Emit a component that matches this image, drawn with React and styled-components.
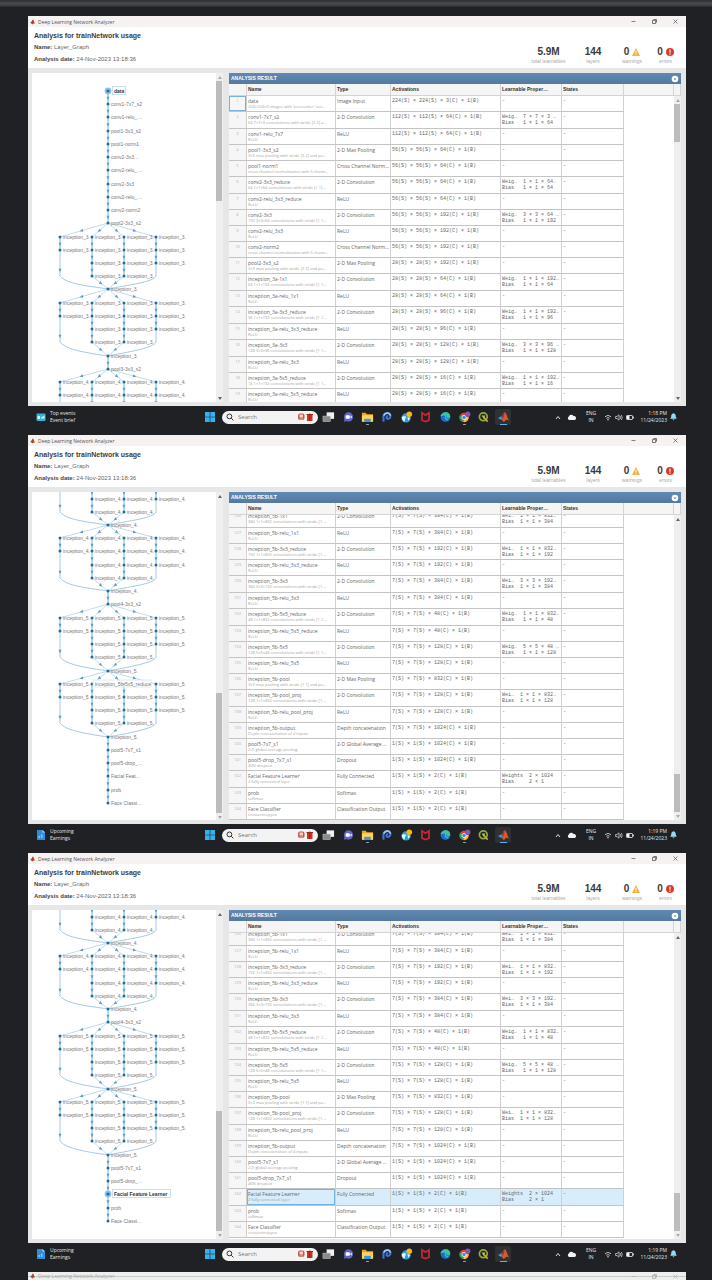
import React from "react";
import styled, { createGlobalStyle, css } from "styled-components";

const sans = '"Liberation Sans", Arial, sans-serif';
const ui = '"Open Sans", "Noto Sans", sans-serif';
const mono = '"Liberation Mono", monospace';

const GlobalStyle = createGlobalStyle`
  * { box-sizing: border-box; }
  body { margin: 0; background: #202124; font-family: ${sans}; }
  button { padding: 0; border: 0; background: none; color: inherit; font: inherit; }
  svg { display: block; }
`;

/* ---------- page and window frame ---------- */

const Page = styled.main`
  display: flex;
  flex-direction: column;
  min-height: 100vh;
  overflow: hidden;
  background: #202124;
`;

const TopStrip = styled.div`
  height: 7px;
  margin-bottom: 9px;
  background: linear-gradient(#2d2e30, #4c4d50 55%, #2a2b2d);
`;

const Screen = styled.section`
  margin: 0 26px 0 28px;
`;

const CutScreen = styled(Screen)`
  flex: 1 0 8px;
  overflow: hidden;
  background: #eeeeec;
`;

const TitleBar = styled.header`
  display: flex;
  align-items: center;
  gap: 3px;
  height: ${(p) => (p.$faint ? 8 : 11)}px;
  padding: 0 6px 0 2px;
  background: ${(p) => (p.$faint ? "linear-gradient(#eeeeec 4px, #c9cbc8 4px, #c9cbc8 5px, #eeeeec 5px)" : "#f5f2f1")};
  color: ${(p) => (p.$faint ? "#aaa" : "#555")};
  font-size: 5px;
  line-height: 8px;
`;

const TitleText = styled.span`
  flex: 1;
  font-family: ${ui};
`;

const WindowButtons = styled.div`
  display: flex;
  gap: 11px;
`;

const WindowButton = styled.button`
  display: grid;
  place-items: center;
  width: 10px;
  height: 8px;
`;

const Summary = styled.div`
  display: flex;
  justify-content: space-between;
  height: 41px;
  padding: 4px 12px 0 6px;
  background: #fff;
`;

const Heading = styled.h1`
  margin: 0 0 2px;
  color: #3c3c3c;
  font-size: 7px;
  line-height: 10px;
`;

const Fact = styled.p`
  margin: 0 0 4px;
  color: #666;
  font-size: 6px;
  line-height: 8px;

  b { color: #444; }
`;

const Stats = styled.div`
  display: grid;
  grid-template-columns: 37px 28px 26px 17px;
  gap: 12px;
  padding-top: 14px;
`;

const Stat = styled.div`
  display: flex;
  flex-direction: column;
  align-items: center;
  color: #aaa;
  font-size: 5px;
  line-height: 6px;
  white-space: nowrap;
`;

const StatValue = styled.strong`
  display: flex;
  align-items: center;
  gap: 3px;
  color: #3a3a3a;
  font-size: 10px;
  line-height: 13px;
`;

const Workspace = styled.div`
  display: grid;
  grid-template-columns: 191px 1fr;
  gap: 6px;
  height: ${(p) => p.$height}px;
  padding: 5px 5px 4px 4px;
  background: #e7e7e7;
`;

const GraphPane = styled.div`
  display: grid;
  grid-template-columns: 1fr 7px;
  min-height: 0;
  overflow: hidden;
  background: #fff;
`;

const GraphSvg = styled.svg`
  width: 184px;
  height: 329px;

  text { font-family: ${sans}; font-size: 5px; fill: #777; }
`;

/* ---------- scrollbar ---------- */

const Bar = styled.div`
  display: flex;
  flex-direction: column;
  width: 7px;
  min-height: 0;
  background: #efefef;
`;

const BarArrow = styled.button`
  display: grid;
  place-items: center;
  height: 8px;
  color: #888;
`;

const BarTrack = styled.div`
  display: flex;
  flex: 1;
  flex-direction: column;
  justify-content: ${(p) => (p.$end ? "flex-end" : "flex-start")};
  padding: 0 1px 0 0;
`;

const BarThumb = styled.div`
  height: ${(p) => p.$size}px;
  background: #bcbcbc;
`;

function Scrollbar({ size, end }) {
  return (
    <Bar>
      <BarArrow aria-label="Scroll up">
        <svg width="4" height="3" viewBox="0 0 4 3"><path d="M2 0L4 3H0Z" fill={end ? "#666" : "#aaa"} /></svg>
      </BarArrow>
      <BarTrack $end={end}><BarThumb $size={size} /></BarTrack>
      <BarArrow aria-label="Scroll down">
        <svg width="4" height="3" viewBox="0 0 4 3"><path d="M0 0H4L2 3Z" fill={end ? "#aaa" : "#666"} /></svg>
      </BarArrow>
    </Bar>
  );
}

/* ---------- layer graph ---------- */

const PITCH = 13.23;
const MID = 76;
const COLS = [28, 60, 92, 124];
const ROWS_IN_COL = [2, 4, 4, 3];
const VIEW_END = 326;

function Arrow({ x1, y1, x2, y2, t = 0.55 }) {
  const angle = (Math.atan2(y2 - y1, x2 - x1) * 180) / Math.PI;
  return (
    <path
      d="M2 0L-1.4 1.5V-1.5Z"
      fill="#5d9cc6"
      transform={`translate(${x1 + (x2 - x1) * t} ${y1 + (y2 - y1) * t}) rotate(${angle})`}
    />
  );
}

function Link({ x1, y1, x2, y2, strong }) {
  return (
    <g>
      <path d={`M${x1} ${y1}L${x2} ${y2}`} stroke={strong ? "#79b2d8" : "#a5cbe3"} strokeWidth={strong ? 1 : 0.7} />
      <Arrow x1={x1} y1={y1} x2={x2} y2={y2} />
    </g>
  );
}

function Node({ x, y, label }) {
  if (y < 0 || y > VIEW_END) return null;
  return (
    <g>
      <circle cx={x} cy={y} r="1.5" fill="#1f6ba3" />
      {label && <text x={x + 3} y={y + 2}>{label}</text>}
    </g>
  );
}

function ActiveNode({ x, y, label, width }) {
  return (
    <g>
      <circle cx={x} cy={y} r="3.4" fill="#8cc4ea" />
      <circle cx={x} cy={y} r="1.6" fill="#1f6ba3" />
      <rect x={x + 4.5} y={y - 4.5} width={width} height="8" fill="#fff" stroke="#b9d9ee" strokeWidth="0.8" />
      <text x={x + 6} y={y + 1.6} style={{ fontWeight: 700, fill: "#333" }}>{label}</text>
    </g>
  );
}

function Block({ at, start, label, hover }) {
  const top = at(start);
  const out = at(start + 5);
  const bend = at(start + 4);
  return (
    <g>
      {COLS.map((x, c) => (
        <g key={x}>
          <Link x1={MID} y1={top} x2={x} y2={at(start + 1)} />
          {Array.from({ length: ROWS_IN_COL[c] - 1 }, (_, r) => (
            <Link key={r} x1={x} y1={at(start + 1 + r)} x2={x} y2={at(start + 2 + r)} strong />
          ))}
          {ROWS_IN_COL[c] === 4 && <Link x1={x} y1={bend} x2={MID} y2={out} />}
        </g>
      ))}
      <path
        d={`M28 ${at(start + 2)}V${bend}C34 ${bend + 8} 56 ${out - 3} ${MID} ${out}C96 ${out - 4} 122 ${bend + 6} 124 ${bend}V${at(start + 3)}`}
        stroke="#8cbddd" strokeWidth="0.8"
      />
      <Arrow x1={28} y1={at(start + 3)} x2={28} y2={bend} />
      {COLS.map((x, c) =>
        Array.from({ length: ROWS_IN_COL[c] }, (_, r) => {
          const hidden = hover && r === 0 && (c === 1 || c === 2);
          return <Node key={`${c}-${r}`} x={x} y={at(start + 1 + r)} label={hidden ? null : label} />;
        })
      )}
      {hover && (
        <g>
          <rect x="61" y={at(start + 1) - 4} width="58" height="7" fill="#fff" fillOpacity="0.7" stroke="#c5dded" strokeWidth="0.6" />
          <text x="63" y={at(start + 1) + 2}>inception_5b-5x5_reduce</text>
        </g>
      )}
    </g>
  );
}

function Chain({ at, from, labels, active }) {
  return (
    <g>
      {labels.slice(1).map((_, i) => (
        <Link key={i} x1={MID} y1={at(from + i)} x2={MID} y2={at(from + i + 1)} strong />
      ))}
      {labels.map((label, i) =>
        i === active ? null : <Node key={i} x={MID} y={at(from + i)} label={label} />
      )}
    </g>
  );
}

function TopGraph() {
  const at = (k) => 18 + Math.round(k * PITCH);
  return (
    <GraphSvg fill="none" role="img" aria-label="Layer graph">
      <Block at={at} start={10} label="inception_3." />
      <Block at={at} start={15} label="inception_3." />
      <Block at={at} start={21} label="inception_4." />
      <Chain
        at={at}
        from={0}
        active={0}
        labels={["data", "conv1-7x7_s2", "conv1-relu_…", "pool1-3x3_s2", "pool1-norm1", "conv2-3x3…", "conv2-relu_…", "conv2-3x3", "conv2-relu_…", "conv2-norm2", "pool2-3x3_s2"]}
      />
      <Node x={MID} y={at(15)} label="inception_3." />
      <Chain at={at} from={20} labels={["inception_3.", "pool3-3x3_s2"]} />
      <ActiveNode x={MID} y={at(0)} label="data" width={13} />
    </GraphSvg>
  );
}

function BottomGraph({ selected }) {
  const at = (k) => 33 + Math.round(k * PITCH);
  return (
    <GraphSvg fill="none" role="img" aria-label="Layer graph">
      <Block at={at} start={-5} label="inception_4." />
      <Block at={at} start={0} label="inception_4." />
      <Block at={at} start={6} label="inception_5." />
      <Block at={at} start={11} label="inception_5." hover={!selected} />
      <Node x={MID} y={at(0)} label="inception_4." />
      <Chain at={at} from={5} labels={["inception_4.", "pool4-3x3_s2"]} />
      <Node x={MID} y={at(11)} label="inception_5." />
      <Chain
        at={at}
        from={16}
        active={selected ? 3 : -1}
        labels={["inception_5.", "pool5-7x7_s1", "pool5-drop_…", "Facial Feat…", "prob", "Face Classi…"]}
      />
      {selected && <ActiveNode x={MID} y={at(19)} label="Facial Feature Learner" width={58} />}
    </GraphSvg>
  );
}

/* ---------- result table ---------- */

const ResultPane = styled.div`
  display: flex;
  flex-direction: column;
  min-width: 0;
  min-height: 0;
  overflow: hidden;
  background: #fff;
`;

const ResultBar = styled.div`
  display: flex;
  align-items: center;
  justify-content: space-between;
  flex: none;
  height: 11px;
  padding: 0 2px;
  background: linear-gradient(#6089b3, #55799f);
  color: #fff;
  font-size: 5px;
  font-weight: 700;
  line-height: 7px;
`;

const Grid = styled.table`
  width: 100%;
  border-collapse: separate;
  border-spacing: 0;
  table-layout: fixed;
`;

const HeadCell = styled.th`
  height: 12px;
  padding: 0 1px;
  border-right: 1px solid #d4d4d4;
  border-bottom: 1px solid #d4d4d4;
  background: #f5f5f5;
  color: #333;
  font-size: 5px;
  line-height: 7px;
  text-align: left;
  white-space: nowrap;
`;

const ResultScroll = styled.div`
  display: grid;
  grid-template-columns: 1fr 7px;
  flex: 1;
  min-height: 0;
`;

const RowsClip = styled.div`
  min-height: 0;
  overflow: hidden;
`;

const RowsGrid = styled(Grid)`
  margin-top: ${(p) => (p.$scrolled ? "-4px" : "0")};
`;

const Cell = styled.td`
  height: ${(p) => (p.$tall ? 17 : 16)}px;
  padding: 2px 1px 0;
  border-right: 1px solid #d0d0d0;
  border-bottom: 1px solid #c4c4c4;
  background: ${(p) => (p.$active ? "#d8edfb" : "#fff")};
  color: #666;
  font-family: ${ui};
  font-size: 5px;
  line-height: 6px;
  vertical-align: top;
  white-space: pre;
  overflow: hidden;
`;

const blueFrame = css`
  box-shadow: inset 0 0 0 1px #74b3e0;
`;

const NumberCell = styled(Cell)`
  background: #f6f6f6;
  color: #b0b0b0;
  font-size: 4px;
  text-align: center;
  ${(p) => p.$framed && blueFrame}
`;

const NameCell = styled(Cell)`
  ${(p) => p.$active && blueFrame}
`;

const MonoCell = styled(Cell)`
  font-family: ${mono};
`;

const EmptyCell = styled.td`
  background: #fff;
`;

const Detail = styled.div`
  color: #a2a2a2;
  font-size: 4px;
  line-height: 6px;
`;

const Columns = ({ tail }) => (
  <colgroup>
    <col style={{ width: 18 }} />
    <col style={{ width: 89 }} />
    <col style={{ width: 55 }} />
    <col style={{ width: 110 }} />
    <col style={{ width: 61 }} />
    <col style={{ width: 62 }} />
    <col />
    {tail && <col style={{ width: 7 }} />}
  </colgroup>
);

const act = (s, c) => `${s}(S) × ${s}(S) × ${c}(C) × 1(B)`;
const conv = (n, k, s) => `${n} ${k} convolutions with stride ${s}`;
const relu = "ReLU";
const conv2d = "2-D Convolution";

/* [number, name, detail, type, activations, weights, bias, tall] */
const firstRows = [
  [1, "data", "224×224×3 images with 'zerocenter' nor…", "Image Input", act(224, 3)],
  [2, "conv1-7x7_s2", conv(64, "7×7×3", "[2 2] a…"), conv2d, act(112, 64), "Weig…  7 × 7 × 3 …", "Bias   1 × 1 × 64", true],
  [3, "conv1-relu_7x7", relu, relu, act(112, 64)],
  [4, "pool1-3x3_s2", "3×3 max pooling with stride [2 2] and pa…", "2-D Max Pooling", act(56, 64)],
  [5, "pool1-norm1", "cross channel normalization with 5 chann…", "Cross Channel Norm…", act(56, 64)],
  [6, "conv2-3x3_reduce", conv(64, "1×1×64", "[1 1] …"), conv2d, act(56, 64), "Weig…  1 × 1 × 64…", "Bias   1 × 1 × 64", true],
  [7, "conv2-relu_3x3_reduce", relu, relu, act(56, 64)],
  [8, "conv2-3x3", conv(192, "3×3×64", "[1 1…"), conv2d, act(56, 192), "Weig…  3 × 3 × 64 …", "Bias   1 × 1 × 192"],
  [9, "conv2-relu_3x3", relu, relu, act(56, 192)],
  [10, "conv2-norm2", "cross channel normalization with 5 chann…", "Cross Channel Norm…", act(56, 192)],
  [11, "pool2-3x3_s2", "3×3 max pooling with stride [2 2] and pa…", "2-D Max Pooling", act(28, 192)],
  [12, "inception_3a-1x1", conv(64, "1×1×192", "[1 1…"), conv2d, act(28, 64), "Weig…  1 × 1 × 192…", "Bias   1 × 1 × 64", true],
  [13, "inception_3a-relu_1x1", relu, relu, act(28, 64)],
  [14, "inception_3a-3x3_reduce", conv(96, "1×1×192", "[1 1…"), conv2d, act(28, 96), "Weig…  1 × 1 × 192…", "Bias   1 × 1 × 96", true],
  [15, "inception_3a-relu_3x3_reduce", relu, relu, act(28, 96)],
  [16, "inception_3a-3x3", conv(128, "3×3×96", "[1 1…"), conv2d, act(28, 128), "Weig…  3 × 3 × 96 …", "Bias   1 × 1 × 128", true],
  [17, "inception_3a-relu_3x3", relu, relu, act(28, 128)],
  [18, "inception_3a-5x5_reduce", conv(16, "1×1×192", "[1 1…"), conv2d, act(28, 16), "Weig…  1 × 1 × 192…", "Bias   1 × 1 × 16"],
  [19, "inception_3a-relu_5x5_reduce", relu, relu, act(28, 16)],
];

const lastRows = [
  [126, "inception_5b-1x1", conv(384, "1×1×832", "[1 …"), conv2d, act(7, 384), "Wei…  1 × 1 × 832…", "Bias  1 × 1 × 384", true],
  [127, "inception_5b-relu_1x1", relu, relu, act(7, 384)],
  [128, "inception_5b-3x3_reduce", conv(192, "1×1×832", "[1 …"), conv2d, act(7, 192), "Wei…  1 × 1 × 832…", "Bias  1 × 1 × 192"],
  [129, "inception_5b-relu_3x3_reduce", relu, relu, act(7, 192)],
  [130, "inception_5b-3x3", conv(384, "3×3×192", "[1 …"), conv2d, act(7, 384), "Wei…  3 × 3 × 192…", "Bias  1 × 1 × 384", true],
  [131, "inception_5b-relu_3x3", relu, relu, act(7, 384)],
  [132, "inception_5b-5x5_reduce", conv(48, "1×1×832", "[1 1…"), conv2d, act(7, 48), "Weig…  1 × 1 × 832…", "Bias   1 × 1 × 48", true],
  [133, "inception_5b-relu_5x5_reduce", relu, relu, act(7, 48)],
  [134, "inception_5b-5x5", conv(128, "5×5×48", "[1 1…"), conv2d, act(7, 128), "Weig…  5 × 5 × 48 …", "Bias   1 × 1 × 128"],
  [135, "inception_5b-relu_5x5", relu, relu, act(7, 128)],
  [136, "inception_5b-pool", "3×3 max pooling with stride [1 1] and pa…", "2-D Max Pooling", act(7, 832)],
  [137, "inception_5b-pool_proj", conv(128, "1×1×832", "[1 …"), conv2d, act(7, 128), "Wei…  1 × 1 × 832…", "Bias  1 × 1 × 128", true],
  [138, "inception_5b-relu_pool_proj", relu, relu, act(7, 128)],
  [139, "inception_5b-output", "Depth concatenation of 4 inputs", "Depth concatenation", act(7, 1024)],
  [140, "pool5-7x7_s1", "2-D global average pooling", "2-D Global Average …", act(1, 1024)],
  [141, "pool5-drop_7x7_s1", "40% dropout", "Dropout", act(1, 1024)],
  [142, "Facial Feature Learner", "2 fully connected layer", "Fully Connected", act(1, 2), "Weights  2 × 1024", "Bias     2 × 1", true],
  [143, "prob", "softmax", "Softmax", act(1, 2)],
  [144, "Face Classifier", "crossentropyex", "Classification Output", act(1, 2)],
];

function ResultTable({ rows, scrolled, framed, active }) {
  return (
    <ResultPane>
      <ResultBar>
        <span>ANALYSIS RESULT</span>
        <button aria-label="Collapse results">
          <svg width="8" height="8" viewBox="0 0 8 8">
            <circle cx="4" cy="4" r="3.3" fill="#fff" />
            <path d="M2.6 3.4L5.4 3.4L4 5.2Z" fill="#5b82ab" />
          </svg>
        </button>
      </ResultBar>
      <Grid>
        <Columns tail />
        <thead>
          <tr>
            {["", "Name", "Type", "Activations", "Learnable Proper…", "States", "", ""].map((h, i) => (
              <HeadCell key={i} scope="col">{h}</HeadCell>
            ))}
          </tr>
        </thead>
      </Grid>
      <ResultScroll>
        <RowsClip>
          <RowsGrid $scrolled={scrolled}>
            <Columns />
            <tbody>
              {rows.map(([n, name, detail, type, acts, weights, bias, tall]) => {
                const cell = { $tall: tall, $active: n === active };
                return (
                  <tr key={n}>
                    <NumberCell $tall={tall} $framed={n === framed}>{n}</NumberCell>
                    <NameCell {...cell}>{name}<Detail>{detail}</Detail></NameCell>
                    <Cell {...cell}>{type}</Cell>
                    <MonoCell {...cell}>{acts}</MonoCell>
                    <MonoCell {...cell}>{weights ? `${weights}\n${bias}` : "-"}</MonoCell>
                    <MonoCell {...cell}>-</MonoCell>
                    <EmptyCell />
                  </tr>
                );
              })}
            </tbody>
          </RowsGrid>
        </RowsClip>
        <Scrollbar size={38} end={scrolled} />
      </ResultScroll>
    </ResultPane>
  );
}

/* ---------- taskbar ---------- */

const TaskbarRow = styled.footer`
  display: flex;
  align-items: center;
  height: 29px;
  padding: 0 9px 7px 8px;
  color: #e4e4e4;
  font-family: ${ui};
  font-size: 5px;
  line-height: 7px;
`;

const Widget = styled.button`
  display: flex;
  align-items: center;
  gap: 4px;
  width: 169px;
  text-align: left;
  white-space: pre;
`;

const SearchBox = styled.label`
  display: flex;
  align-items: center;
  gap: 4px;
  width: 96px;
  height: 13px;
  margin: 0 1px 0 7px;
  padding: 0 4px;
  border-radius: 7px;
  background: #f3f3f3;

  input {
    flex: 1;
    width: 20px;
    min-width: 0;
    padding: 0;
    border: 0;
    background: none;
    font-family: ${ui};
    font-size: 6px;
    line-height: 9px;
    outline: 0;
  }
  input::placeholder { color: #777; opacity: 1; }
`;

const Apps = styled.nav`
  display: grid;
  grid-template-columns: repeat(10, 1fr);
  width: 194px;
`;

const AppButton = styled.button`
  display: grid;
  justify-self: center;
  place-items: center;
  position: relative;
  width: 16px;
  height: 16px;
  border-radius: 2px;
  background: ${(p) => (p.$current ? "#303132" : "none")};

  &::after {
    content: ${(p) => (p.$running || p.$current ? '""' : "none")};
    position: absolute;
    bottom: 0;
    width: ${(p) => (p.$current ? 7 : 3)}px;
    height: 1px;
    background: ${(p) => (p.$current ? "#58b4ea" : "#9a9a9a")};
  }
`;

const Tray = styled.div`
  display: flex;
  align-items: center;
  gap: 3px;
  margin-left: auto;
`;

const Language = styled.button`
  width: 20px;
  text-align: center;
  line-height: 7px;
`;

const Clock = styled.button`
  width: 30px;
  text-align: right;
  white-space: pre;
`;

const icons = {
  "Task view": (
    <><rect x="5" y="1" width="8" height="7" fill="#f1f1f1" /><rect x="1" y="5" width="8" height="6" fill="#8a8a8a" stroke="#c9c9c9" strokeWidth="0.5" /></>
  ),
  Chat: (
    <><circle cx="7" cy="6" r="5" fill="#6264c6" /><path d="M2 11L3 7L6 10Z" fill="#6264c6" /><rect x="4" y="4" width="4.4" height="4" rx="1" fill="#fff" /><path d="M8.8 5.6L10.4 4.4V7.6L8.8 6.4Z" fill="#fff" /></>
  ),
  Files: (
    <><path d="M1 1.5H5L6.5 3H13V11H1Z" fill="#e9a820" /><rect x="1" y="4" width="12" height="7" rx="0.6" fill="#fcd35c" /><rect x="3.5" y="8" width="7" height="3.4" fill="#3c95d6" /></>
  ),
  Paint: (
    <><path d="M3.5 11C4.500 9 3 6 4 4C5.500 1.500 9 1 10.600 3C12 5 11 7.500 9 8C7.500 8.300 6.600 7.300 7 6.200C7.300 5.500 8 5.200 8.700 5.500" fill="none" stroke="#3f74d8" strokeWidth="2.200" /><path d="M4 4.500C5.500 1.500 9 1 10.600 3C11 3.500 11.200 4 11.200 4.700" fill="none" stroke="#9ec4f2" strokeWidth="1.800" /></>
  ),
  Globe: (
    <><circle cx="6.500" cy="7" r="5" fill="#2f9fd8" /><path d="M2 6C4 4 5 6 6 5C7 7 5 8 5 11C3 10 2 9 2 6ZM8 6L11 7L9 10Z" fill="#e6f5fb" /><circle cx="10" cy="3" r="3" fill="#f7b916" /></>
  ),
  Shield: (
    <path d="M3.200 1.500V9.500L7 11L10.800 9.500V1.500L7 4Z" fill="none" stroke="#c92637" strokeWidth="1.900" />
  ),
  Edge: (
    <><circle cx="7" cy="6" r="5.300" fill="#1671c4" /><path d="M2 5C3 1 8-.5 11 2.500C13 5 12 8 9 7.500C8 7 8.500 6 8 5C6.500 3 3.500 4 2 5Z" fill="#42c48b" /><path d="M2 5C4 3 7 3.500 7.400 5.500C6 6 6.500 9 10 9.200" fill="none" stroke="#48b8ea" strokeWidth="1.200" /></>
  ),
  Chrome: (
    <><circle cx="6.500" cy="6.500" r="5" fill="#e14434" /><path d="M6.500 6.500L2 4.500A5 5 0 0 0 6.500 11.500Z" fill="#2fa24f" /><path d="M6.500 6.500L11.500 6A5 5 0 0 1 6 11.500Z" fill="#f6c32c" /><circle cx="6.500" cy="6.500" r="2.300" fill="#4387ea" stroke="#fff" strokeWidth="0.800" /><circle cx="10.500" cy="3" r="2.900" fill="#8257b4" /></>
  ),
  Quick: (
    <><circle cx="6.800" cy="5.800" r="4.200" fill="none" stroke="#8fab3a" strokeWidth="1.900" /><path d="M7 6L11.500 11" stroke="#c9a83c" strokeWidth="1.900" /><path d="M5 4.500H9L7 8Z" fill="#b5c763" /></>
  ),
  Matlab: (
    <><path d="M1 7L4.500 5.300L6.500 7.400L4 9Z" fill="#4a8fd0" /><path d="M4.500 5.300C6.500 4.500 7 1 8.400 1C10 1 11 6.500 13 10C11 8.700 9.800 8.500 8.600 10.300C8 11.200 7 11.500 6.500 11C6 9.500 5.500 9 4 9L6.500 7.400Z" fill="#d9582c" /><path d="M8.400 1C7.500 2 6.500 4.500 4.500 5.300L6.500 7.400C7.500 5.500 7.800 3 8.400 1Z" fill="#7a3a46" /></>
  ),
};

const running = ["Files", "Chrome"];

function Taskbar({ widget, time }) {
  return (
    <TaskbarRow>
      <Widget>
        <svg width="10" height="10" viewBox="0 0 10 10">
          {widget === "events" ? (
            <><rect x="0.500" y="1.500" width="9" height="7.500" rx="1" fill="#35b3d4" /><path d="M1.500 4H4V7H1.500ZM5 5.500L8.500 3.500V6.500H5Z" fill="#d8f6fb" /></>
          ) : (
            <><path d="M1 0H6.500L9 2.500V10H1Z" fill="#2d8fdc" /><path d="M6.500 0L9 2.500H6.500Z" fill="#a5dcff" /><path d="M2.500 8V6H4V8ZM5 8V4.500H6.500V8Z" fill="#7cc8fb" /></>
          )}
        </svg>
        <span>{widget === "events" ? "Top events\nEvent brief" : "Upcoming\nEarnings"}</span>
      </Widget>
      <button aria-label="Start">
        <svg width="10" height="10" viewBox="0 0 10 10">
          <path d="M0 0H4.700V4.700H0ZM5.300 0H10V4.700H5.300ZM0 5.300H4.700V10H0ZM5.300 5.300H10V10H5.300Z" fill="#35b1ee" />
        </svg>
      </button>
      <SearchBox>
        <svg width="8" height="8" viewBox="0 0 8 8" fill="none" stroke="#333">
          <circle cx="3.400" cy="3.400" r="2.400" /><path d="M5.200 5.200L7.400 7.400" />
        </svg>
        <input type="search" placeholder="Search" aria-label="Search" />
        <svg width="17" height="8" viewBox="0 0 17 8">
          <rect x="1" y="0.500" width="6.500" height="6.500" rx="2" fill="#c4574e" /><rect x="2.500" y="1.500" width="3.500" height="3" fill="#f1d7c2" /><path d="M2.500 6H6" stroke="#f0c070" />
          <rect x="10" y="1.500" width="5.500" height="6.500" fill="#cf3226" /><path d="M9.500 1.500H16M12.700 .5V8" stroke="#a02219" />
        </svg>
      </SearchBox>
      <Apps>
        {Object.entries(icons).map(([name, art]) => (
          <AppButton key={name} aria-label={name} $current={name === "Matlab"} $running={running.includes(name)}>
            <svg width="13" height="12" viewBox="0 0 14 12">{art}</svg>
          </AppButton>
        ))}
      </Apps>
      <Tray>
        <svg width="6" height="5" viewBox="0 0 6 5" fill="none" stroke="#ddd"><path d="M1 4L3 1.500L5 4" /></svg>
        <svg width="14" height="8" viewBox="0 0 14 8"><path d="M5 7A2 2 0 0 1 4.800 3.500A2.600 2.600 0 0 1 9.500 3A2 2 0 0 1 10.500 7Z" fill="#f2f2f2" /></svg>
        <Language aria-label="Input language">ENG<br />IN</Language>
        <svg width="8" height="7" viewBox="0 0 8 7" fill="none" stroke="#bbb"><path d="M1 2.700Q4 0 7 2.700M2.400 4.300Q4 2.900 5.600 4.300" /><circle cx="4" cy="5.800" r="0.700" fill="#eee" stroke="none" /></svg>
        <svg width="8" height="7" viewBox="0 0 8 7" fill="none" stroke="#ccc" strokeWidth="0.800"><path d="M.6 2.500H2L4 .8V6.200L2 4.500H.6ZM5.200 2Q6.200 3.500 5.200 5M6.400 1Q8 3.500 6.400 6" /></svg>
        <svg width="8" height="7" viewBox="0 0 8 7"><rect x="0.500" y="1.500" width="6" height="4" rx="0.600" fill="none" stroke="#ccc" /><rect x="1" y="2" width="2.500" height="3" fill="#f4f4f4" /><path d="M7.500 2.600V4.400" stroke="#ccc" /></svg>
        <Clock aria-label="Date and time">{`${time} PM\n11/24/2023`}</Clock>
        <svg width="7" height="8" viewBox="0 0 7 8"><path d="M3.500 .3C5.400 .5 5.800 2 5.800 3.800L6.700 5.800H.3L1.200 3.800C1.200 2 1.600 .5 3.500 .3ZM2.500 6.300H4.500L3.500 7.600Z" fill="#8fdcf4" /></svg>
      </Tray>
    </TaskbarRow>
  );
}

/* ---------- analyzer window ---------- */

function WindowTitle({ faint }) {
  return (
    <TitleBar $faint={faint}>
      <svg width="5" height="6" viewBox="0 0 5 6">
        <path d="M0 3.500L1.500 2.600L2.500 4Z" fill="#4675a8" />
        <path d="M1.500 2.800C2.300 2 2.400 .5 3 .5C3.700 .5 4 3 5 5C3.800 4.300 3.300 4.500 2.400 5.600L1 4.200Z" fill="#b63d28" />
      </svg>
      <TitleText>Deep Learning Network Analyzer</TitleText>
      <WindowButtons>
        <WindowButton aria-label="Minimize"><svg width="5" height="5" viewBox="0 0 5 5"><path d="M.5 2.500H4.500" stroke="currentColor" strokeWidth="0.700" /></svg></WindowButton>
        <WindowButton aria-label="Restore"><svg width="5" height="5" viewBox="0 0 5 5" fill="none" stroke="currentColor" strokeWidth="0.800"><path d="M.5 1.400H3.600V4.500H.5ZM1.400 .5H4.500V3.600" /></svg></WindowButton>
        <WindowButton aria-label="Close"><svg width="5" height="5" viewBox="0 0 5 5"><path d="M.5 .5L4.500 4.500M4.500 .5L.5 4.500" stroke="currentColor" strokeWidth="0.700" /></svg></WindowButton>
      </WindowButtons>
    </TitleBar>
  );
}

function Analyzer({ height, widget, time, graph, ...table }) {
  return (
    <Screen>
      <WindowTitle />
      <Summary>
        <div>
          <Heading>Analysis for trainNetwork usage</Heading>
          <Fact><b>Name:</b> Layer_Graph</Fact>
          <Fact><b>Analysis date:</b> 24-Nov-2023 13:18:36</Fact>
        </div>
        <Stats>
          <Stat><StatValue>5.9M</StatValue>total learnables</Stat>
          <Stat><StatValue>144</StatValue>layers</Stat>
          <Stat>
            <StatValue>0
              <svg width="8" height="8" viewBox="0 0 8 8"><path d="M4 0L8 8H0Z" fill="#f5b13a" /><path d="M4 2.800V5.500M4 6.200V7.200" stroke="#fff" strokeWidth="0.900" /></svg>
            </StatValue>
            warnings
          </Stat>
          <Stat>
            <StatValue>0
              <svg width="8" height="8" viewBox="0 0 8 8"><circle cx="4" cy="4" r="4" fill="#d93a2b" /><path d="M4 1.500V4.800M4 5.500V6.700" stroke="#fff" strokeWidth="1.100" /></svg>
            </StatValue>
            errors
          </Stat>
        </Stats>
      </Summary>
      <Workspace $height={height}>
        <GraphPane>
          {graph}
          <Scrollbar size={120} end={table.scrolled} />
        </GraphPane>
        <ResultTable {...table} />
      </Workspace>
      <Taskbar widget={widget} time={time} />
    </Screen>
  );
}

export default function App() {
  return (
    <Page>
      <GlobalStyle />
      <TopStrip />
      <Analyzer height={338} widget="events" time="1:18" graph={<TopGraph />} rows={firstRows} framed={1} />
      <Analyzer height={337} widget="earnings" time="1:19" graph={<BottomGraph />} rows={lastRows} scrolled />
      <Analyzer height={338} widget="earnings" time="1:19" graph={<BottomGraph selected />} rows={lastRows} scrolled active={142} />
      <CutScreen>
        <WindowTitle faint />
      </CutScreen>
    </Page>
  );
}
